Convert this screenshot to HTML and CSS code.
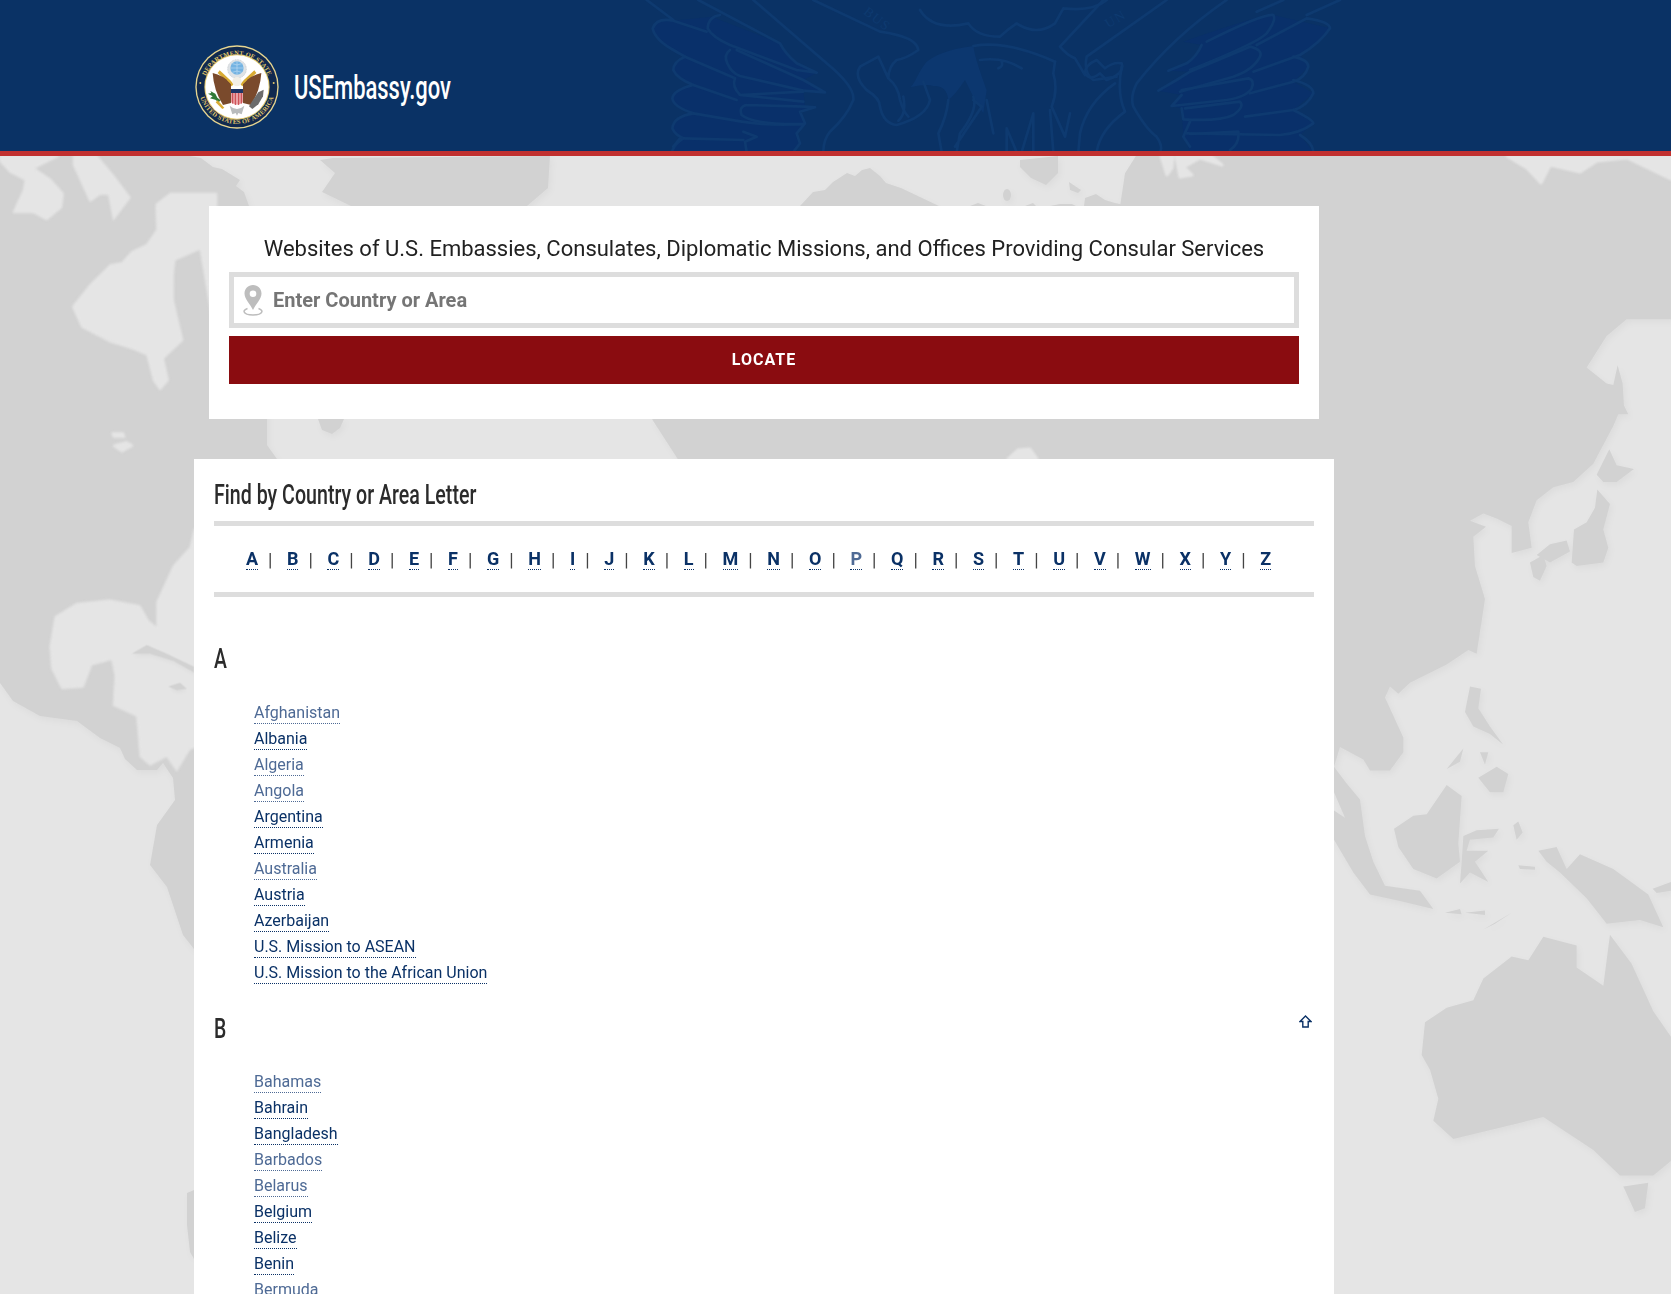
FILE: index.html
```html
<!DOCTYPE html>
<html lang="en">
<head>
<meta charset="utf-8">
<title>USEmbassy.gov</title>
<link rel="stylesheet" href="styles.css">
</head>
<body>
<svg class="world" viewBox="0 0 1671 1294" width="1671" height="1294" aria-hidden="true">
  <g class="land">
    <polygon points="0,156 190,156 201,158 213,167 222,169 240,180 236,186 244,192 249,206 270,300 267,419 267,445 277,459 300,600 300,960 194,949 183,935 167,887 150,865 157,825 175,800 173,778 163,763 157,770 137,770 125,759 120,748 100,738 77,721 40,716 13,701 0,683"/>
    <polygon points="320,160 333,158 550,156 548,188 527,206 351,206 322,192 335,173"/>
    <polygon points="800,206 813,192 825,190 833,182 847,173 855,176 862,170 870,168 880,176 886,183 901,188 939,206"/>
    <polygon points="1020,160 1058,156 1058,173 1046,185 1031,178 1020,167"/>
    <ellipse cx="1007" cy="195" rx="4" ry="6"/>
    <polygon points="1069,182 1081,190 1078,193 1070,190"/>
    <polygon points="970,206 978,203 986,206"/>
    <polygon points="1025,206 1033,203 1036,206"/>
    <polygon points="1050,206 1060,204 1072,204 1076,206"/>
    <polygon points="1084,206 1085,198 1096,194 1105,200 1115,203 1130,206"/>
    <polygon points="318,419 322,430 332,434 340,428 344,419"/>
    <polygon points="187,1193 194,1190 194,1259 190,1252 187,1225"/>
    <g transform="translate(1320 150) scale(.3333 .7299)">
      <polygon points="-2004,369 -1926,424 -1926,1000 -100,1000 42,845 60,818 130,835 150,850 210,850 250,825 250,805 195,750 210,735 235,745 270,730 380,705 445,685 470,690 480,660 495,615 465,570 460,530 498,516 450,508 490,498 530,505 575,515 575,552 635,545 625,510 650,480 700,462 760,455 820,430 880,378 895,362 925,362 912,350 908,320 893,295 880,322 860,320 800,298 860,255 920,232 1053,232 1053,8 -552,8 -585,32 -600,77 -900,300"/>
      <polygon points="42,845 80,868 120,890 135,940 160,975 195,1008 300,1015 340,1040 230,1028 150,1020 100,990 42,945 42,905 75,915 42,880"/>
      <polygon points="755,565 762,520 800,510 825,490 832,465 870,485 850,520 865,545 850,565 770,570"/>
      <polygon points="830,445 868,410 890,432 942,437 890,455 850,455"/>
      <polygon points="630,565 670,555 680,570 660,590 640,585"/>
      <polygon points="650,555 690,540 740,535 750,550 690,565"/>
      <polygon points="435,770 450,735 483,738 475,765 510,790 550,815 510,800 460,790"/>
      <polygon points="380,848 430,820 420,838"/>
      <polygon points="480,825 505,825 495,842"/>
      <polygon points="475,860 530,845 565,855 550,880 510,880"/>
      <polygon points="222,930 280,912 320,910 380,870 425,885 415,950 420,975 350,998 280,985 235,955"/>
      <polygon points="430,940 470,932 537,930 520,942 450,945 440,960 505,960 465,975 505,1003 450,990 420,1005 425,975"/>
      <polygon points="375,1045 420,1040 425,1047"/>
      <polygon points="435,1045 495,1042 495,1048"/>
      <polygon points="490,1068 575,1045 525,1060"/>
      <polygon points="595,980 645,982 645,986 600,985"/>
      <polygon points="580,925 595,920 608,935 590,945"/>
      <polygon points="655,960 710,955 740,985 780,965 880,985 985,1020 1030,1065 960,1055 860,1060 800,1025 720,990 680,975"/>
      <polygon points="998,1012 1053,1003 1053,1015 1010,1018"/>
      <polygon points="305,1240 315,1195 380,1175 460,1165 490,1135 575,1105 625,1110 670,1078 770,1090 770,1120 850,1145 870,1075 935,1115 1000,1180 1053,1215 1053,1385 1000,1405 900,1405 820,1370 670,1325 400,1355 340,1330 355,1300 330,1260"/>
      <polygon points="910,1420 985,1415 975,1450 945,1455"/>
    </g>
  </g>
  <g class="water">
    <g transform="translate(0 150) scale(.3333 .7299)">
      <polygon points="700,520 582,520 570,545 520,570 470,620 470,655 445,645 420,625 330,617 230,622 165,640 150,680 155,710 185,737 250,735 275,705 335,697 345,720 340,760 410,775 420,830 450,842 500,830 530,850 570,820 700,800"/>
      <polygon points="218,215 270,185 330,158 365,155 395,140 440,130 470,110 468,75 510,60 560,60 650,60 650,270 600,135 525,150 520,170 520,205 548,260 490,285 505,315 480,328 460,315 440,280 400,272 330,262 245,242"/>
      <polygon points="0,15 30,30 75,40 70,55 40,85 100,85 140,95 185,78 190,60 150,40 100,25 175,8 0,8"/>
      <polygon points="220,20 270,70 300,60 325,60 340,95 390,65 340,35 290,8 220,8"/>
      <polygon points="335,388 370,388 375,393 340,393"/>
      <polygon points="340,405 380,400 398,405 365,413"/>
    </g>
    <polygon points="1161,156 1173,156 1172,168 1167,175"/>
    <polygon points="1176,156 1180,177 1192,175 1184,167 1200,158 1222,165 1211,156"/>
    <polygon points="1507,156 1527,168 1541,183 1550,165 1580,172 1597,161 1627,158 1671,179 1671,156"/>
    <polygon points="1008,459 1018,450 1030,449 1037,459"/>
  </g>
  <g class="land" transform="translate(0 150) scale(.3333 .7299)">
    <polygon points="395,690 440,678 500,690 582,708 582,716 520,700 450,690"/>
    <polygon points="505,735 540,730 560,738 530,740"/>
  </g>
</svg>

<header class="site-header">
  <svg class="watermark" viewBox="0 0 1671 151" width="1671" height="151" aria-hidden="true">
    <g transform="translate(640 0) scale(.33333)">
      <path class="wm-feather" d="M100 62Q50 52 38 85Q45 120 100 150L135 170Q100 185 100 210Q110 235 160 255Q100 270 97 295Q100 320 160 340Q100 350 97 385Q105 405 130 415Q105 430 95 456L460 456L480 430L470 400L495 370L480 335L525 322L495 320L490 272L555 277L490 240L530 218L470 190Q435 160 420 130L215 50Z"/>
      <path class="wm-feather" d="M1630 125Q1870 40 1900 45L2070 85Q2040 130 1980 165L2005 200L1960 245L2020 280L1960 330L2020 370L1980 405L2020 456L1650 456L1630 400L1625 325L1595 318L1625 285L1555 272L1610 240L1650 215L1585 212L1640 190Q1670 170 1685 135Z"/>
      <path class="wm-head" d="M1000 138C950 145 900 155 860 185C835 215 830 240 812 262Q860 250 880 258Q920 255 925 300Q945 285 975 240L1000 290L1030 340L1040 270C1015 200 1005 170 1000 138Z"/>
      <g class="wm-line">
        <path d="M1000 138Q1100 120 1245 185"/>
        <path d="M20 0L100 60M200 95L100 62Q50 52 38 85Q45 120 100 150L135 170Q100 185 100 210Q110 235 160 255Q100 270 97 295Q100 320 160 340Q100 350 97 385Q105 405 130 415Q105 430 95 456"/>
        <path d="M135 170L285 235M160 255L290 300M160 340L305 365Q390 378 490 372M130 415L310 420"/>
        <path d="M240 45Q205 50 203 85Q215 110 270 135L470 210M175 0L420 130Q435 160 470 190L530 218L470 210"/>
        <path d="M270 150Q250 165 262 190Q275 220 300 228L490 272L555 277L490 240L290 150"/>
        <path d="M285 235Q275 260 300 285L490 305M300 285L490 275"/>
        <path d="M320 315Q295 320 305 345Q340 375 490 372M320 315L495 320L525 322L480 335L495 370L470 400L480 430L460 456M310 395L350 410L315 425L320 456M120 415L100 440"/>
        <path d="M340 0L560 190Q645 260 640 300Q620 350 570 395Q550 420 550 456"/>
        <path d="M520 0L720 95Q830 110 835 150Q800 175 770 180Q745 200 745 235L715 170L660 200Q640 230 680 270Q720 295 720 320Q730 370 770 375Q860 350 870 300L850 245M745 235Q775 260 780 300Q790 335 805 350M790 290Q800 340 775 362"/>
        <path d="M840 30Q880 95 985 70Q1010 110 1080 110Q1100 90 1130 70Q1190 110 1245 70L1270 25Q1360 35 1400 0"/>
        <path d="M925 300Q920 350 895 400L905 456M1000 290Q1015 330 960 400L950 456M1000 300L1025 320L945 440M1040 300L1060 400"/>
        <path d="M1020 180Q1090 170 1145 205M1075 205Q1090 200 1085 185"/>
        <path d="M1245 185L1240 220Q1255 270 1235 320L1275 410L1290 340M1230 330L1240 456M1180 456L1180 340L1145 456M1100 456L1100 385L1130 456"/>
      </g>
      <g transform="translate(1080 0)" class="wm-line">
        <path d="M680 0Q520 110 410 250Q390 290 400 320Q440 390 470 410Q490 440 480 456"/>
        <path d="M500 0L260 170Q250 220 280 240L350 230M310 0L180 140Q200 165 225 175L255 225"/>
        <path d="M290 180Q255 195 255 220Q270 245 300 220L320 240Q375 220 365 190Q340 185 315 205Z"/>
        <path d="M345 250Q260 310 240 400L235 456M365 200Q350 280 375 335Q300 390 290 456"/>
        <path d="M850 0L770 35M1020 0L920 45"/>
        <path d="M620 125Q790 40 820 45Q830 60 800 100Q770 130 570 210M505 212L560 190Q590 170 605 135"/>
        <path d="M770 135L920 55Q990 65 990 85Q960 130 900 165L760 215"/>
        <path d="M570 215L750 140Q790 150 780 170Q760 210 700 230L540 275M475 272L530 240L570 215"/>
        <path d="M880 170Q925 180 925 200Q915 235 880 245L750 280"/>
        <path d="M545 270L745 235Q765 240 755 265Q740 290 680 300L515 318L545 285"/>
        <path d="M880 240Q940 255 940 280Q920 320 880 330L735 350"/>
        <path d="M555 325L720 305Q735 320 700 345Q660 365 550 358L545 325"/>
        <path d="M880 330Q940 360 940 370Q900 400 840 405L560 400"/>
        <path d="M570 402L715 395Q720 430 690 450M900 405Q940 430 940 456M570 365L550 410L570 440"/>
      </g>
      <path id="wmL" class="wm-none" d="M668 40L790 135"/>
      <text class="wm-text"><textPath href="#wmL">BUS</textPath></text>
      <path id="wmR" class="wm-none" d="M1405 85L1500 28"/>
      <text class="wm-text"><textPath href="#wmR">UN</textPath></text>
    </g>
  </svg>
  <a class="brand" href="#">
    <svg class="seal" viewBox="74 74 252 252" width="84" height="84" role="img" aria-label="Seal">
      <circle cx="200" cy="200" r="125" fill="#e8d690"/>
      <circle cx="200" cy="200" r="121" fill="#10294f"/>
      <circle cx="200" cy="200" r="98" fill="#e2c76a"/>
      <circle cx="200" cy="200" r="95" fill="#ffffff"/>
      <defs>
        <path id="sealTop" d="M99 205A101 101 0 0 1 301 205"/>
        <path id="sealBot" d="M84 195A116 116 0 0 0 316 195"/>
      </defs>
      <text class="seal-text"><textPath href="#sealTop" startOffset="50%" text-anchor="middle">DEPARTMENT OF STATE</textPath></text>
      <text class="seal-text"><textPath href="#sealBot" startOffset="50%" text-anchor="middle">UNITED STATES OF AMERICA</textPath></text>
      <circle cx="90" cy="188" r="3" fill="#e2c76a"/>
      <circle cx="310" cy="188" r="3" fill="#e2c76a"/>
      <circle cx="200" cy="146" r="28" fill="#dfe3e6" stroke="#b8bec3" stroke-width="2" stroke-dasharray="3 2"/>
      <circle cx="200" cy="143" r="20" fill="#74b3e2"/>
      <path d="M180 143h40M200 123v40M186 130q14 8 28 0M186 156q14-8 28 0" stroke="#cfe6f6" fill="none" stroke-width="1.5"/>
      <path d="M148 150l32 30 10 12-6 6-42-40zM252 150l-32 30-10 12 6 6 42-40z" fill="#d9ab33"/>
      <path d="M127 158q30 6 55 32v58l-24 6q-28-44-31-96zM273 158q-30 6-55 32v58l24 6q28-44 31-96z" fill="#7a4a2c"/>
      <circle cx="200" cy="184" r="14" fill="#f3efe6"/>
      <path d="M182 206h36v40q-18 14-36 0z" fill="#e9a3a6"/>
      <path d="M187 218v32M195 218v36M205 218v36M213 218v32" stroke="#c9444a" stroke-width="3"/>
      <path d="M182 206h36v12h-36z" fill="#1f3566"/>
      <path d="M178 256q22 20 44 0l-8 26-10-4-4 8-4-8-10 4z" fill="#b9bcbd"/>
      <path d="M120 212l15 8 6 12 10 8-6 6-10-8-16-4 8-6-14-8 10-2z" fill="#2f7a37"/>
      <path d="M142 240l20 22-6 4-20-20z" fill="#d9ab33"/>
      <path d="M280 208l-16 8-18 26-10 16 10 8 18-14 14-24z" fill="#6c6c6c"/>
      <path d="M172 178l12 12M228 178l-12 12" stroke="#d9ab33" stroke-width="5"/>
    </svg>
    <span class="brand-name">USEmbassy.gov</span>
  </a>
</header>

<main class="page">
  <section class="search-card">
    <p class="search-title">Websites of U.S. Embassies, Consulates, Diplomatic Missions, and Offices Providing Consular Services</p>
    <div class="search-box">
      <svg class="pin" viewBox="0 0 20 32" width="20" height="32" aria-hidden="true">
        <path d="M10 1C5 1 1.500 4.800 1.500 9.600C1.500 15 7 20 10 26C13 20 18.500 15 18.500 9.600C18.500 4.800 15 1 10 1ZM10 6.500A3.300 3.300 0 1 1 10 13.100A3.300 3.300 0 1 1 10 6.500Z" fill="#bdbdbd"/>
        <path d="M4.500 24.500C1.500 25.500.8 27 1.200 28C2 30 6 31 10 31C14 31 18 30 18.800 28C19.200 27 18.500 25.500 15.500 24.500" fill="none" stroke="#bdbdbd" stroke-width="1.500"/>
      </svg>
      <span class="placeholder">Enter Country or Area</span>
    </div>
    <button class="locate" type="button">LOCATE</button>
  </section>

  <section class="list-card">
    <h2 class="find-title"><span>Find by Country or Area Letter</span></h2>
    <nav class="alpha">
      <a href="#">A</a><i>|</i><a href="#">B</a><i>|</i><a href="#">C</a><i>|</i><a href="#">D</a><i>|</i><a href="#">E</a><i>|</i><a href="#">F</a><i>|</i><a href="#">G</a><i>|</i><a href="#">H</a><i>|</i><a href="#">I</a><i>|</i><a href="#">J</a><i>|</i><a href="#">K</a><i>|</i><a href="#">L</a><i>|</i><a href="#">M</a><i>|</i><a href="#">N</a><i>|</i><a href="#">O</a><i>|</i><a href="#" class="seen">P</a><i>|</i><a href="#">Q</a><i>|</i><a href="#">R</a><i>|</i><a href="#">S</a><i>|</i><a href="#">T</a><i>|</i><a href="#">U</a><i>|</i><a href="#">V</a><i>|</i><a href="#">W</a><i>|</i><a href="#">X</a><i>|</i><a href="#">Y</a><i>|</i><a href="#">Z</a>
    </nav>

    <div class="letter-head first"><h3>A</h3></div>
    <ul class="countries">
      <li><a href="#" class="seen">Afghanistan</a></li>
      <li><a href="#">Albania</a></li>
      <li><a href="#" class="seen">Algeria</a></li>
      <li><a href="#" class="seen">Angola</a></li>
      <li><a href="#">Argentina</a></li>
      <li><a href="#">Armenia</a></li>
      <li><a href="#" class="seen">Australia</a></li>
      <li><a href="#">Austria</a></li>
      <li><a href="#">Azerbaijan</a></li>
      <li><a href="#">U.S. Mission to ASEAN</a></li>
      <li><a href="#">U.S. Mission to the African Union</a></li>
    </ul>

    <div class="letter-head"><h3>B</h3>
      <svg class="to-top" viewBox="0 0 13 13" width="13" height="13" aria-hidden="true"><path d="M6.500 1L12 6.500H9.200V12H3.800V6.500H1Z" fill="none" stroke="#0a3166" stroke-width="1.400"/></svg>
    </div>
    <ul class="countries">
      <li><a href="#" class="seen">Bahamas</a></li>
      <li><a href="#">Bahrain</a></li>
      <li><a href="#">Bangladesh</a></li>
      <li><a href="#" class="seen">Barbados</a></li>
      <li><a href="#" class="seen">Belarus</a></li>
      <li><a href="#">Belgium</a></li>
      <li><a href="#">Belize</a></li>
      <li><a href="#">Benin</a></li>
      <li><a href="#" class="seen">Bermuda</a></li>
    </ul>
  </section>
</main>
</body>
</html>
```

FILE: styles.css
```css
* { box-sizing: border-box; }
html, body { margin: 0; padding: 0; height: 1294px; overflow: hidden; }
body {
  position: relative;
  background: #e5e5e5;
  font-family: Roboto, "Liberation Sans", sans-serif;
  color: #212121;
}
.world { position: absolute; left: 0; top: 0; display: block; }
.land { fill: #d2d2d2; filter: drop-shadow(2px 3px 3px rgba(0,0,0,.035)); }
.water { fill: #e5e5e5; stroke: #e5e5e5; stroke-width: 3; stroke-linejoin: round; filter: blur(.8px); }

.site-header {
  position: relative;
  height: 156px;
  background: #0a3265;
  border-bottom: 5px solid #c1302f;
  padding: 45px 0 0 195px;
}
.watermark { position: absolute; left: 0; top: 0; }
.wm-feather { fill: #09306a; }
.wm-head { fill: #0c376f; }
.wm-line path { fill: none; stroke: #0e3a70; stroke-width: 8; stroke-linejoin: round; stroke-linecap: round; }
.wm-none { fill: none; }
.wm-text { fill: #0e3a70; font: 40px "Liberation Serif", serif; letter-spacing: 4px; }
.brand { position: relative; display: flex; align-items: center; gap: 15px; text-decoration: none; }
.seal { display: block; flex: none; }
.seal-text { fill: #e2c76a; font: 700 19px "Liberation Serif", serif; letter-spacing: .6px; }
.brand-name {
  display: inline-block;
  font-family: Roboto, sans-serif;
  font-weight: 500;
  font-size: 33px;
  color: #fff;
  line-height: 1;
  transform: scaleX(.665);
  transform-origin: left center;
}

.page { position: relative; width: 1140px; margin-left: 194px; padding-top: 50px; }
.search-card {
  width: 1110px;
  margin: 0 15px 40px;
  height: 213px;
  background: #fff;
  padding: 28px 20px 0;
}
.search-title { margin: 0 0 9px; text-align: center; font-size: 22px; line-height: 29px; color: #212121; }
.search-box {
  height: 56px;
  border: 5px solid #dddddd;
  background: #fff;
  display: flex;
  align-items: center;
  gap: 10px;
  padding-left: 9px;
}
.pin { flex: none; }
.placeholder { font-size: 20px; font-weight: 700; color: #757575; }
.locate {
  display: block;
  width: 100%;
  height: 48px;
  margin-top: 8px;
  padding: 0 0 2px;
  border: 0;
  background: #8a0c10;
  color: #fff;
  font: 700 16px Roboto, sans-serif;
  letter-spacing: 1px;
}

.list-card { background: #fff; padding: 0 20px; height: 900px; }
.find-title {
  margin: 0;
  height: 62px;
  padding-top: 20px;
  font: 500 27px/32px Roboto, sans-serif;
  color: #2b2b2b;
}
.find-title span { display: inline-block; white-space: nowrap; transform: scaleX(.727); transform-origin: left center; }
.alpha {
  height: 76px;
  border-top: 5px solid #dddddd;
  border-bottom: 5px solid #dddddd;
  padding-right: 11px;
  display: flex;
  align-items: center;
  justify-content: center;
}
.alpha a {
  font-size: 18px;
  font-weight: 700;
  line-height: 21px;
  color: #0a3166;
  text-decoration: none;
  border-bottom: 1px dotted #0a3166;
}
.alpha a.seen { color: #4e6a95; }
.alpha i { font-style: normal; font-size: 18px; color: #444; padding: 0 14.600px 0 10px; }

.letter-head { display: flex; justify-content: space-between; align-items: flex-start; height: 56px; }
.letter-head.first { margin-top: 46px; height: 57px; }
.letter-head h3 {
  margin: 0;
  font: 500 27px/32px Roboto, sans-serif;
  color: #2b2b2b;
  transform: scaleX(.72);
  transform-origin: left center;
}
.to-top { margin: 2px 2px 0 0; }
.countries { list-style: none; margin: 0 0 27px; padding: 0 0 0 40px; }
.countries li { height: 26px; line-height: 26px; font-size: 16px; }
.countries a { color: #0a3166; text-decoration: none; border-bottom: 1px dotted #0a3166; padding-bottom: 1px; }
.countries a.seen { color: #4e6a95; border-bottom-color: #4e6a95; }
```
